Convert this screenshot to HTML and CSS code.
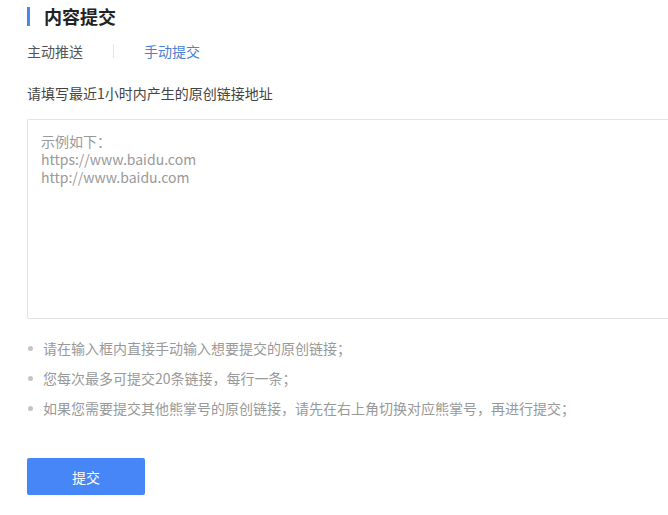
FILE: index.html
```html
<!DOCTYPE html>
<html lang="zh-CN">
<head>
    <meta charset="UTF-8">
    <title>内容提交</title>
    <link rel="stylesheet" href="styles.css">
</head>
<body>
    <div class="page">
        <!-- Title -->
        <h1 class="title">内容提交</h1>

        <!-- Tabs -->
        <div class="tabs">
            <span class="tab">主动推送</span>
            <span class="tab-sep"></span>
            <span class="tab active">手动提交</span>
        </div>

        <p class="label">请填写最近1小时内产生的原创链接地址</p>

        <textarea class="links" placeholder="示例如下：&#10;https://www.baidu.com&#10;http://www.baidu.com"></textarea>

        <ul class="tips">
            <li>请在输入框内直接手动输入想要提交的原创链接；</li>
            <li>您每次最多可提交20条链接，每行一条；</li>
            <li>如果您需要提交其他熊掌号的原创链接，请先在右上角切换对应熊掌号，再进行提交；</li>
        </ul>

        <button class="submit-btn">提交</button>
    </div>
</body>
</html>
```

FILE: styles.css
```css
* {
    margin: 0;
    padding: 0;
    box-sizing: border-box;
}

body {
    font-family: "Noto Sans CJK SC", "Microsoft YaHei", sans-serif;
    font-size: 14px;
    color: #333;
    background: #fff;
    overflow: hidden;
}

.page {
    padding: 7px 0 0 27px;
}

/* Title */
.title {
    font-size: 18px;
    font-weight: bold;
    color: #222;
    line-height: 19px;
    border-left: 3px solid #4d86ea;
    padding-left: 14px;
}

/* Tabs */
.tabs {
    display: flex;
    align-items: center;
    margin-top: 17px;
    height: 16px;
}

.tab {
    font-size: 14px;
    color: #555;
    line-height: 16px;
}

.tab.active {
    color: #4a7fd6;
}

.tab-sep {
    width: 1px;
    height: 14px;
    background: #e3e3e3;
    margin: 0 30px;
}

.label {
    margin-top: 26px;
    line-height: 16px;
    color: #444;
}

.links {
    display: block;
    margin-top: 18px;
    width: 100%;
    height: 200px;
    border: 1px solid #e2e2e2;
    border-right: none;
    border-radius: 2px 0 0 2px;
    padding: 12px 13px;
    font-family: inherit;
    font-size: 14px;
    line-height: 18px;
    resize: none;
    outline: none;
}

.links::placeholder {
    color: #999;
}

/* Tips */
.tips {
    list-style: none;
    margin-top: 21px;
}

.tips li {
    position: relative;
    padding-left: 16px;
    line-height: 16px;
    margin-bottom: 14px;
    color: #999;
}

.tips li::before {
    content: "";
    position: absolute;
    left: 1px;
    top: 6px;
    width: 5px;
    height: 5px;
    border-radius: 50%;
    background: #c4c4c4;
}

/* Button */
.submit-btn {
    margin-top: 28px;
    width: 118px;
    height: 37px;
    border: none;
    border-radius: 2px;
    background: #4686f7;
    color: #fff;
    font-family: inherit;
    font-size: 14px;
    cursor: pointer;
}
```
